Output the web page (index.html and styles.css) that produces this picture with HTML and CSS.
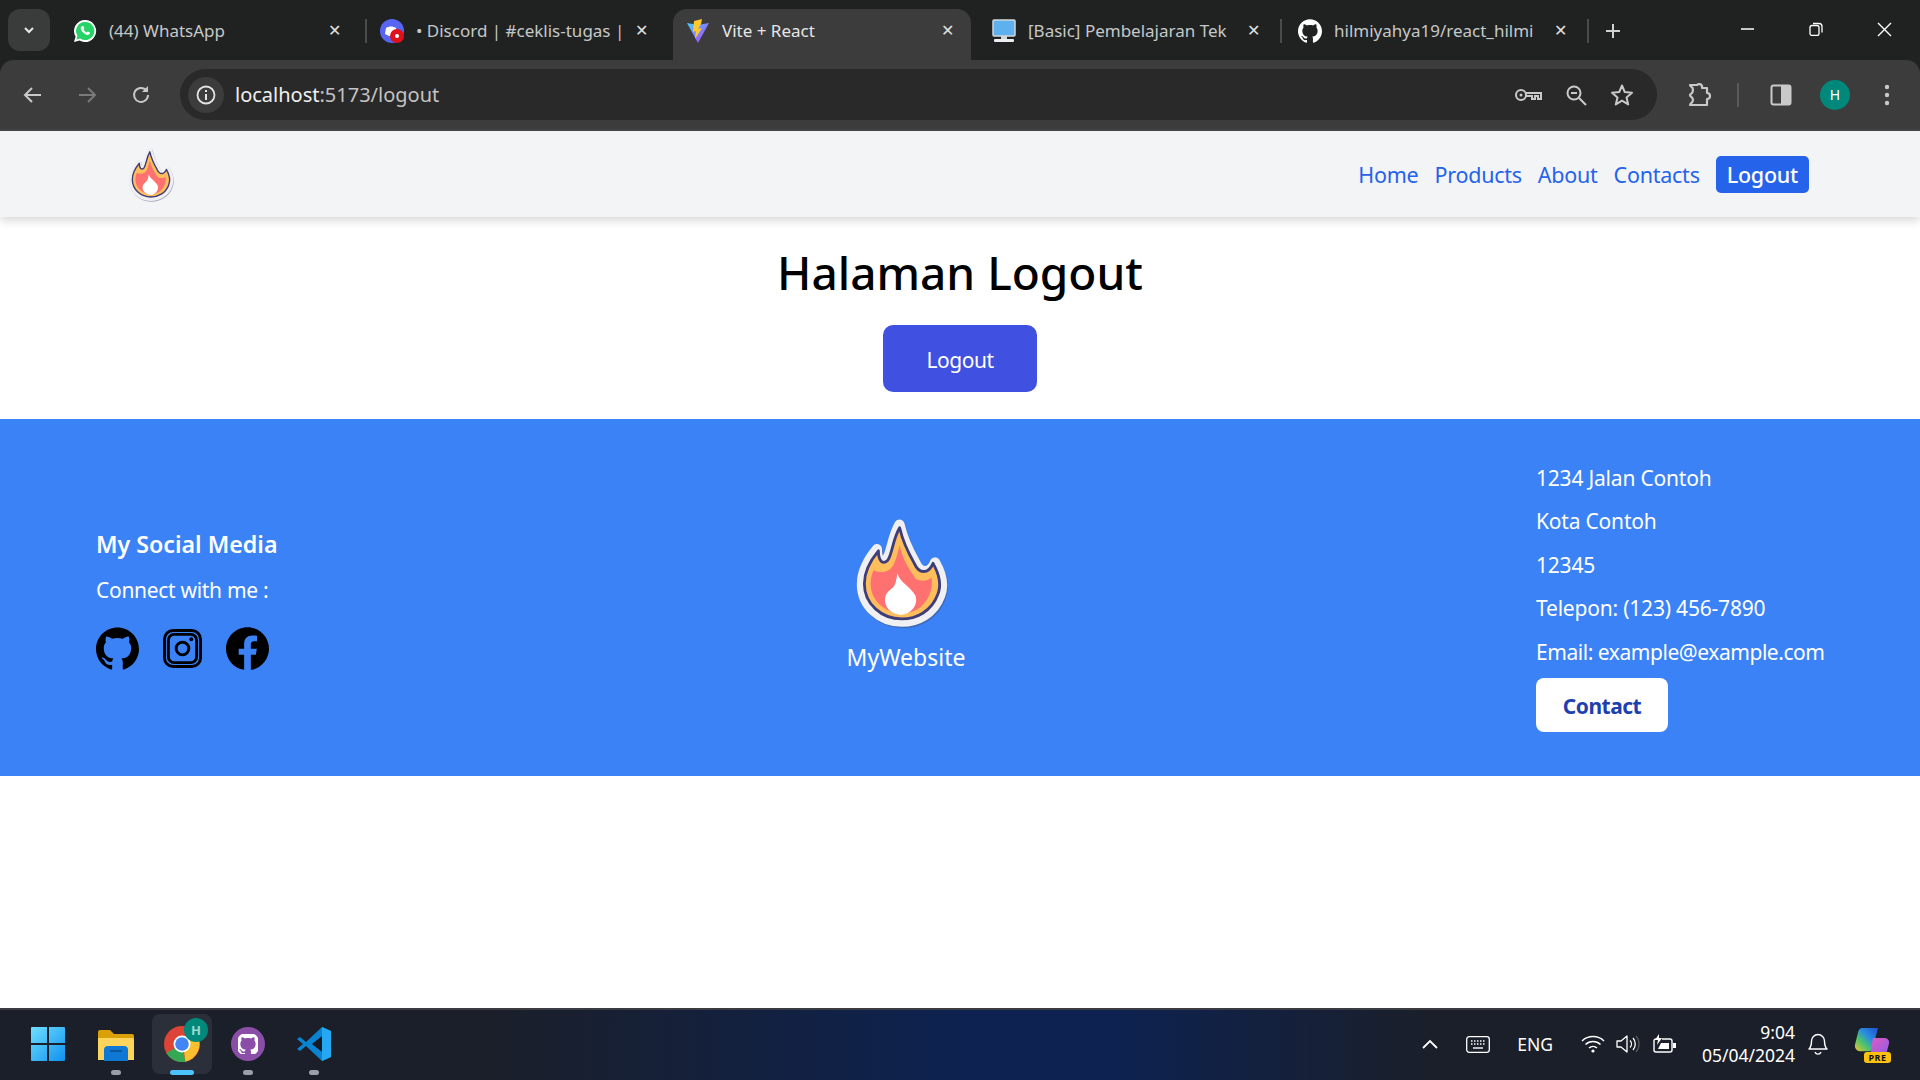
FILE: index.html
```html
<!DOCTYPE html>
<html>
  <head>
    <title>Vite + React</title>
    <link rel="stylesheet" href="styles.css">
  </head>
  <body>
    <svg class="defs" width="0" height="0">
      <symbol id="flame" viewBox="95 50 295 340">
        <path class="flame-shadow" d="M238 76C248 120 262 150 285 190C300 225 330 225 345 190C365 225 372 260 360 290C340 345 290 368 245 368C180 368 125 320 125 255C125 215 145 180 170 150C170 185 185 195 200 180C215 160 215 115 238 76Z" transform="translate(3 5)"/>
        <path class="flame-halo" d="M238 76C248 120 262 150 285 190C300 225 330 225 345 190C365 225 372 260 360 290C340 345 290 368 245 368C180 368 125 320 125 255C125 215 145 180 170 150C170 185 185 195 200 180C215 160 215 115 238 76Z"/>
        <g transform="translate(245 230) scale(.94) translate(-245 -230)">
          <path class="flame-outer" d="M238 76C248 120 262 150 285 190C300 225 330 225 345 190C365 225 372 260 360 290C340 345 290 368 245 368C180 368 125 320 125 255C125 215 145 180 170 150C170 185 185 195 200 180C215 160 215 115 238 76Z"/>
          <path class="flame-inner" d="M238 132C245 170 265 205 290 240C310 250 330 245 340 235C345 265 335 300 310 325C290 345 265 350 245 350C195 350 145 310 145 255C145 235 150 222 155 212C175 222 205 220 218 195C228 175 232 155 238 132Z"/>
        </g>
        <path class="flame-core" d="M232 222C238 250 272 262 286 290C296 320 270 346 243 347C215 346 190 325 195 295C198 280 207 275 215 268C228 258 228 240 232 222Z"/>
      </symbol>
    </svg>

    <div class="chrome">
      <div class="tabstrip">
        <div class="tab-search"><svg width="14" height="14" viewBox="0 0 14 14"><path d="M3 5l4 4 4-4" fill="none" stroke="#e8e8e8" stroke-width="2"/></svg></div>
        <div class="tab">
          <svg class="favicon" viewBox="0 0 24 24"><path d="M12 1a11 11 0 0 0-9.4 16.6L1 23l5.6-1.5A11 11 0 1 0 12 1z" fill="#fff"/><path d="M12 3a9 9 0 0 0-7.6 13.7l-1 3.7 3.8-1A9 9 0 1 0 12 3z" fill="#25d366"/><path d="M8.7 7.2c-.8.7-1.300 2-.7 3.400 1 2.400 3 4.300 5.400 5.100 1.500.5 2.700 0 3.300-.9.300-.5.300-1 .2-1.300l-2.100-1-.9 1.100c-1.400-.5-2.600-1.600-3.300-3l.8-1-.9-2.300c-.5-.2-1.300-.4-1.800-.1z" fill="#fff"/></svg>
          <span class="tab-title">(44) WhatsApp</span>
          <span class="tab-close">✕</span>
        </div>
        <span class="tab-sep"></span>
        <div class="tab">
          <svg class="favicon" viewBox="0 0 24 24"><circle cx="12" cy="12" r="12" fill="#5865f2"/><path d="M6 9c3-2 7-2 10 0l2 6-4 2H9l-4-2z" fill="#fff"/><circle cx="17" cy="17" r="7" fill="#e0111b"/><circle cx="17" cy="17" r="2" fill="#fff"/></svg>
          <span class="tab-title">• Discord | #ceklis-tugas |</span>
          <span class="tab-close">✕</span>
        </div>
        <div class="tab tab-active">
          <svg class="favicon" viewBox="0 0 24 24"><path d="M1 4l11 2 11-2-11 20z" fill="url(#vite)"/><defs><linearGradient id="vite" x1="0" y1="0" x2="1" y2="1"><stop offset="0" stop-color="#41d1ff"/><stop offset="1" stop-color="#bd34fe"/></linearGradient></defs><path d="M16 0L8 2l-1 11 3-1-1 8 7-11-4 1 3-5z" fill="#ffca28"/></svg>
          <span class="tab-title">Vite + React</span>
          <span class="tab-close">✕</span>
        </div>
        <div class="tab tab-basic">
          <svg class="favicon" viewBox="0 0 24 24"><rect x="1" y="1" width="22" height="16" rx="1" fill="#5eb0ef" stroke="#cfd8dc" stroke-width="1.500"/><rect x="9" y="17" width="6" height="3" fill="#cfd8dc"/><rect x="2" y="20" width="20" height="3" rx="1" fill="#eceff1"/></svg>
          <span class="tab-title">[Basic] Pembelajaran Tek</span>
          <span class="tab-close">✕</span>
        </div>
        <span class="tab-sep"></span>
        <div class="tab tab-git">
          <svg class="favicon" viewBox="0 0 24 24"><path fill="#fff" d="M12 .297c-6.63 0-12 5.373-12 12 0 5.303 3.438 9.800 8.205 11.385.6.113.82-.258.82-.577 0-.285-.01-1.040-.015-2.040-3.338.724-4.042-1.610-4.042-1.610C4.422 18.070 3.633 17.700 3.633 17.700c-1.087-.744.084-.729.084-.729 1.205.084 1.838 1.236 1.838 1.236 1.070 1.835 2.809 1.305 3.495.998.108-.776.417-1.305.76-1.605-2.665-.3-5.466-1.332-5.466-5.930 0-1.310.465-2.380 1.235-3.220-.135-.303-.54-1.523.105-3.176 0 0 1.005-.322 3.300 1.230.96-.267 1.980-.399 3-.405 1.020.006 2.040.138 3 .405 2.280-1.552 3.285-1.230 3.285-1.230.645 1.653.24 2.873.12 3.176.765.84 1.230 1.910 1.230 3.220 0 4.610-2.805 5.625-5.475 5.920.42.36.81 1.096.81 2.220 0 1.606-.015 2.896-.015 3.286 0 .315.21.69.825.57C20.565 22.092 24 17.592 24 12.297c0-6.627-5.373-12-12-12"/></svg>
          <span class="tab-title">hilmiyahya19/react_hilmi</span>
          <span class="tab-close">✕</span>
        </div>
        <span class="tab-sep"></span>
        <svg class="new-tab" width="18" height="18" viewBox="0 0 18 18"><path d="M9 2v14M2 9h14" stroke="#d0d0d0" stroke-width="2"/></svg>
        <div class="window-controls">
          <svg width="14" height="14" viewBox="0 0 14 14"><path d="M0 7h13" stroke="#fff" stroke-width="1.500"/></svg>
          <svg width="14" height="14" viewBox="0 0 14 14"><rect x="1" y="3.500" width="9" height="10" rx="2" fill="none" stroke="#fff" stroke-width="1.300"/><path d="M4 1.500h6a3 3 0 0 1 3 3v6" fill="none" stroke="#fff" stroke-width="1.300"/></svg>
          <svg width="15" height="15" viewBox="0 0 15 15"><path d="M1 1l13 13M14 1L1 14" stroke="#fff" stroke-width="1.400"/></svg>
        </div>
      </div>

      <div class="toolbar">
        <svg class="tool" width="24" height="24" viewBox="0 0 24 24"><path d="M20 12H5M11 5l-7 7 7 7" fill="none" stroke="#c9c9c9" stroke-width="2"/></svg>
        <svg class="tool" width="24" height="24" viewBox="0 0 24 24"><path d="M4 12h15M13 5l7 7-7 7" fill="none" stroke="#7a7a7a" stroke-width="2"/></svg>
        <svg class="tool" width="24" height="24" viewBox="0 0 24 24"><path d="M19 12a7 7 0 1 1-2-5" fill="none" stroke="#c9c9c9" stroke-width="2"/><path d="M19 3v6h-6z" fill="#c9c9c9"/></svg>
        <div class="omnibox">
          <div class="site-info"><svg width="22" height="22" viewBox="0 0 22 22"><circle cx="11" cy="11" r="8.500" fill="none" stroke="#e3e3e3" stroke-width="1.800"/><path d="M11 10v6M11 6v2" stroke="#e3e3e3" stroke-width="2"/></svg></div>
          <span class="url">localhost<span class="url-path">:5173/logout</span></span>
          <div class="omni-icons">
            <svg width="28" height="20" viewBox="0 0 28 20"><circle cx="7" cy="10" r="5" fill="none" stroke="#c9c9c9" stroke-width="2"/><circle cx="7" cy="10" r="1.500" fill="#c9c9c9"/><path d="M12 8h15v6h-3v-3h-3v3h-3v-3h-6" fill="none" stroke="#c9c9c9" stroke-width="2"/></svg>
            <svg width="22" height="22" viewBox="0 0 22 22"><circle cx="9" cy="9" r="6.500" fill="none" stroke="#c9c9c9" stroke-width="2"/><path d="M6 9h6M14 14l7 7" stroke="#c9c9c9" stroke-width="2"/></svg>
            <svg width="24" height="24" viewBox="0 0 24 24"><path d="M12 2.500l2.800 6.600 7.200.6-5.500 4.700 1.700 7-6.200-3.700-6.200 3.700 1.700-7L2 9.700l7.200-.6z" fill="none" stroke="#c9c9c9" stroke-width="2" stroke-linejoin="round"/></svg>
          </div>
        </div>
        <svg class="tool-ext" width="26" height="26" viewBox="0 0 26 26"><path d="M4 3h7a3 3 0 0 1 5 1v2h5v5a3 3 0 0 1 0 6v6H4c0-2 3-2 3-5s-3-3-3-5c0-1 3-1 3-5s-3-3-3-5z" fill="none" stroke="#c9c9c9" stroke-width="2.200" stroke-linejoin="round"/></svg>
        <span class="tool-sep"></span>
        <svg class="tool-panel" width="22" height="22" viewBox="0 0 22 22"><rect x="1.500" y="1.500" width="19" height="19" rx="2" fill="none" stroke="#c9c9c9" stroke-width="2"/><rect x="11" y="1.500" width="9.500" height="19" fill="#c9c9c9"/></svg>
        <span class="avatar">H</span>
        <svg class="tool-menu" width="8" height="24" viewBox="0 0 8 24"><circle cx="4" cy="4" r="2.200" fill="#c9c9c9"/><circle cx="4" cy="12" r="2.200" fill="#c9c9c9"/><circle cx="4" cy="20" r="2.200" fill="#c9c9c9"/></svg>
      </div>
    </div>

    <div class="viewport">
      <nav class="navbar">
        <svg class="nav-logo"><use href="#flame"/></svg>
        <div class="nav-links">
          <a href="#">Home</a>
          <a href="#">Products</a>
          <a href="#">About</a>
          <a href="#">Contacts</a>
          <a href="#" class="nav-active">Logout</a>
        </div>
      </nav>

      <main class="content">
        <h1>Halaman Logout</h1>
        <button class="logout-btn">Logout</button>
      </main>

      <footer class="footer">
        <div class="social">
          <h3>My Social Media</h3>
          <p>Connect with me :</p>
          <div class="social-icons">
            <svg width="43" height="43" viewBox="0 0 24 24"><path d="M12 .297c-6.63 0-12 5.373-12 12 0 5.303 3.438 9.800 8.205 11.385.6.113.82-.258.82-.577 0-.285-.01-1.040-.015-2.040-3.338.724-4.042-1.610-4.042-1.610C4.422 18.070 3.633 17.700 3.633 17.700c-1.087-.744.084-.729.084-.729 1.205.084 1.838 1.236 1.838 1.236 1.070 1.835 2.809 1.305 3.495.998.108-.776.417-1.305.76-1.605-2.665-.3-5.466-1.332-5.466-5.930 0-1.310.465-2.380 1.235-3.220-.135-.303-.54-1.523.105-3.176 0 0 1.005-.322 3.300 1.230.96-.267 1.980-.399 3-.405 1.020.006 2.040.138 3 .405 2.280-1.552 3.285-1.230 3.285-1.230.645 1.653.24 2.873.12 3.176.765.84 1.230 1.910 1.230 3.220 0 4.610-2.805 5.625-5.475 5.920.42.36.81 1.096.81 2.220 0 1.606-.015 2.896-.015 3.286 0 .315.21.69.825.57C20.565 22.092 24 17.592 24 12.297c0-6.627-5.373-12-12-12"/></svg>
            <svg width="39" height="39" viewBox="0 0 40 40"><rect x="1.500" y="1.500" width="37" height="37" rx="9" fill="none" stroke="#000" stroke-width="3"/><rect x="5.500" y="5.500" width="29" height="29" rx="6" fill="none" stroke="#000" stroke-width="3"/><circle cx="20" cy="20" r="6.500" fill="none" stroke="#000" stroke-width="3"/><circle cx="29" cy="10.500" r="2" fill="#000"/></svg>
            <svg width="43" height="43" viewBox="0 0 24 24"><path d="M24 12.073c0-6.627-5.373-12-12-12s-12 5.373-12 12c0 5.990 4.388 10.954 10.125 11.854v-8.385H7.078v-3.470h3.047V9.430c0-3.007 1.792-4.669 4.533-4.669 1.312 0 2.686.235 2.686.235v2.953H15.830c-1.491 0-1.956.925-1.956 1.874v2.250h3.328l-.532 3.470h-2.796v8.385C19.612 23.027 24 18.062 24 12.073z"/></svg>
          </div>
        </div>
        <div class="brand">
          <svg class="brand-logo"><use href="#flame"/></svg>
          <span>MyWebsite</span>
        </div>
        <div class="address">
          <p>1234 Jalan Contoh</p>
          <p>Kota Contoh</p>
          <p>12345</p>
          <p>Telepon: (123) 456-7890</p>
          <p class="address-email">Email: example@example.com</p>
          <button class="contact-btn">Contact</button>
        </div>
      </footer>
    </div>

    <div class="taskbar">
      <div class="task-apps">
        <div class="task-app">
          <svg width="36" height="36" viewBox="0 0 36 36"><defs><linearGradient id="win" x1="0" y1="0" x2="1" y2="1"><stop offset="0" stop-color="#6fe0ff"/><stop offset="1" stop-color="#0f90ee"/></linearGradient></defs><path d="M1 2a1 1 0 0 1 1-1h15v16H1zM19 1h15a1 1 0 0 1 1 1v15H19zM1 19h16v16H2a1 1 0 0 1-1-1zM19 19h16v15a1 1 0 0 1-1 1H19z" fill="url(#win)"/></svg>
        </div>
        <div class="task-app running">
          <svg width="36" height="36" viewBox="0 0 36 36"><path d="M0 6a2 2 0 0 1 2-2h10l4 4h18a2 2 0 0 1 2 2v4H0z" fill="#d9a008"/><path d="M0 12h34a2 2 0 0 1 2 2v20H0z" fill="#fdd55c"/><path d="M6 24a4 4 0 0 1 4-4h16a4 4 0 0 1 4 4v11H6z" fill="#0f78d4"/><path d="M12 25h12" stroke="#0a4e8c" stroke-width="1.500"/></svg>
        </div>
        <div class="task-app running active">
          <span class="chrome-logo">
            <svg width="36" height="36" viewBox="0 0 36 36"><circle cx="18" cy="18" r="18" fill="#db4437"/><path d="M18 18L2.400 27a18 18 0 0 0 19 8.700z" fill="#34a853"/><path d="M18 10h15.600a18 18 0 0 1-12.200 25.700z" fill="#fbc02d"/><circle cx="18" cy="18" r="8.500" fill="#fff"/><circle cx="18" cy="18" r="6.800" fill="#4285f4"/></svg>
            <span class="chrome-badge">H</span>
          </span>
        </div>
        <div class="task-app running">
          <svg width="34" height="34" viewBox="0 0 34 34"><circle cx="17" cy="17" r="17" fill="#8a4ea8"/><svg x="7" y="7" width="20" height="20" viewBox="2 2 20 20"><path fill="#fff" d="M12 .297c-6.63 0-12 5.373-12 12 0 5.303 3.438 9.800 8.205 11.385.6.113.82-.258.82-.577 0-.285-.01-1.040-.015-2.040-3.338.724-4.042-1.610-4.042-1.610C4.422 18.070 3.633 17.700 3.633 17.700c-1.087-.744.084-.729.084-.729 1.205.084 1.838 1.236 1.838 1.236 1.070 1.835 2.809 1.305 3.495.998.108-.776.417-1.305.76-1.605-2.665-.3-5.466-1.332-5.466-5.930 0-1.310.465-2.380 1.235-3.220-.135-.303-.54-1.523.105-3.176 0 0 1.005-.322 3.300 1.230.96-.267 1.980-.399 3-.405 1.020.006 2.040.138 3 .405 2.280-1.552 3.285-1.230 3.285-1.230.645 1.653.24 2.873.12 3.176.765.84 1.230 1.910 1.230 3.220 0 4.610-2.805 5.625-5.475 5.920.42.36.81 1.096.81 2.220 0 1.606-.015 2.896-.015 3.286 0 .315.21.69.825.57C20.565 22.092 24 17.592 24 12.297c0-6.627-5.373-12-12-12"/></svg></svg>
        </div>
        <div class="task-app running">
          <svg width="36" height="36" viewBox="0 0 36 36"><path d="M26 1l9 4v26l-9 4L10 20l-6 5-3-2 6-5-6-5 3-2 6 5z" fill="#0a84d0"/><path d="M26 1l9 4v26l-9 4z" fill="#24a8f2"/><path d="M26 10v16l-10-8z" fill="#151a24"/></svg>
        </div>
      </div>
      <div class="tray">
        <svg class="tray-chevron" width="16" height="10" viewBox="0 0 16 10"><path d="M1 9l7-7 7 7" fill="none" stroke="#fff" stroke-width="1.800"/></svg>
        <svg class="tray-keyboard" width="24" height="17" viewBox="0 0 24 17"><rect x=".7" y=".7" width="22.600" height="15.600" rx="2.500" fill="none" stroke="#fff" stroke-width="1.300"/><path d="M5 5h14M5 8h14" stroke="#fff" stroke-width="1.500" stroke-dasharray="1.500 1.500"/><path d="M7 12h10" stroke="#fff" stroke-width="1.400"/></svg>
        <span class="tray-lang">ENG</span>
        <svg class="tray-wifi" width="24" height="18" viewBox="0 0 24 18"><path d="M1 6a16 16 0 0 1 22 0M4.500 9.500a11 11 0 0 1 15 0M8 13a6 6 0 0 1 8 0" fill="none" stroke="#fff" stroke-width="1.500"/><circle cx="12" cy="16" r="1.600" fill="#fff"/></svg>
        <svg class="tray-sound" width="24" height="20" viewBox="0 0 24 20"><path d="M1 7h4l6-5v16l-6-5H1z" fill="none" stroke="#fff" stroke-width="1.300" stroke-linejoin="round"/><path d="M14 6.500a5 5 0 0 1 0 7M17 4a9 9 0 0 1 0 12" fill="none" stroke="#fff" stroke-width="1.300"/><path d="M20 2a12 12 0 0 1 0 16" fill="none" stroke="#555" stroke-width="1.300"/></svg>
        <svg class="tray-battery" width="24" height="20" viewBox="0 0 24 20"><path d="M5 5H3a2 2 0 0 0-2 2v9a2 2 0 0 0 2 2h14a2 2 0 0 0 2-2V7a2 2 0 0 0-2-2H9" fill="none" stroke="#fff" stroke-width="1.400"/><path d="M5 15l3-6h8v6z" fill="#fff"/><path d="M20 9h3v5h-3z" fill="#fff"/><path d="M6 0L2 6h3l-1 5 5-7H6z" fill="#fff"/></svg>
        <div class="clock"><span>9:04</span><span>05/04/2024</span></div>
        <svg class="tray-bell" width="22" height="24" viewBox="0 0 22 24"><path d="M2 17c2-2 2.500-4 2.500-8a6.500 6.500 0 0 1 13 0c0 4 .5 6 2.500 8z" fill="none" stroke="#fff" stroke-width="1.400" stroke-linejoin="round"/><path d="M8 20a3.200 3.200 0 0 0 6 0" fill="none" stroke="#fff" stroke-width="1.400"/></svg>
        <span class="copilot">
          <svg width="36" height="31" viewBox="0 0 36 28" preserveAspectRatio="none"><defs><linearGradient id="cop" x1="0" y1="1" x2="1" y2="0"><stop offset="0" stop-color="#f2c230"/><stop offset=".35" stop-color="#49c46c"/><stop offset=".6" stop-color="#2a8de0"/><stop offset="1" stop-color="#1e4fd0"/></linearGradient><linearGradient id="cop2" x1="0" y1="0" x2="1" y2="1"><stop offset="0" stop-color="#e25cc0"/><stop offset="1" stop-color="#8a5be8"/></linearGradient></defs><path d="M8 1h16l-5 17a5 5 0 0 1-5 4H6a5 5 0 0 1-5-6l3-11a5 5 0 0 1 4-4z" fill="url(#cop)"/><path d="M19 10h12a4 4 0 0 1 4 5l-2 7a6 6 0 0 1-5 4H16z" fill="url(#cop2)"/></svg>
          <span class="pre">PRE</span>
        </span>
      </div>
    </div>
  </body>
</html>
```

FILE: styles.css
```css
* {
  box-sizing: border-box;
}

html, body {
  height: 100%;
}

body {
  margin: 0;
  display: flex;
  flex-direction: column;
  height: 1080px;
  overflow: hidden;
  background-color: #ffffff;
  font-family: "Noto Sans", "Open Sans", sans-serif;
  color: #000000;
}

.defs {
  position: absolute;
}

/* flame logo */
.flame-shadow {
  fill: none;
  stroke: #4a4f7a;
  stroke-width: 30px;
  stroke-linejoin: round;
  opacity: .5;
}

.flame-halo {
  fill: #f0f0f2;
  stroke: #f0f0f2;
  stroke-width: 31px;
  stroke-linejoin: round;
}

.flame-outer {
  fill: #ffbe5c;
  stroke: #3f3d78;
  stroke-width: 9px;
  stroke-linejoin: round;
}

.flame-inner {
  fill: #ff7070;
}

.flame-core {
  fill: #ffffff;
}

/* browser */
.chrome {
  background-color: #202222;
  height: 131px;
  flex: none;
}

.tabstrip {
  display: flex;
  align-items: flex-start;
  height: 60px;
  padding: 9px 0 0 8px;
}

.tab-search {
  width: 42px;
  height: 42px;
  border-radius: 12px;
  background-color: #3a3b3b;
  display: flex;
  align-items: center;
  justify-content: center;
  margin-right: 10px;
  flex: none;
}

.tab {
  width: 306px;
  height: 51px;
  padding: 10px 25px 0 13px;
  display: flex;
  align-items: flex-start;
  font-size: 17px;
  color: #c6c8c8;
  flex: none;
  border-radius: 14px 14px 0 0;
}

.tab-active {
  background-color: #3c3c3c;
  color: #e6e6e6;
  width: 298px;
  padding-right: 17px;
}

.tab-basic {
  width: 310px;
  padding: 10px 21px 0 21px;
}

.tab-git {
  padding: 10px 21px 0 16px;
}

.favicon {
  width: 24px;
  height: 24px;
  flex: none;
  margin-right: 12px;
}

.tab-title {
  flex: 1;
  min-width: 0;
  white-space: nowrap;
  line-height: 24px;
}

.tab-close {
  margin-left: 8px;
  font-size: 16px;
  line-height: 22px;
  color: #e0e0e0;
}

.tab-sep {
  width: 2px;
  height: 24px;
  margin: 10px 0 0 -1px;
  background-color: #4a4c4c;
  flex: none;
}

.new-tab {
  margin: 13px 0 0 15px;
  flex: none;
}

.window-controls {
  margin-left: auto;
  width: 151px;
  margin-right: 28px;
  padding-top: 13px;
  display: flex;
  justify-content: space-between;
}

.toolbar {
  height: 71px;
  background-color: #3c3c3c;
  border-radius: 14px 14px 0 0;
  border-bottom: 2px solid #464646;
  padding: 9px 0 9px 21px;
  display: flex;
  align-items: center;
}

.tool {
  margin-right: 30px;
  flex: none;
}

.tool:nth-child(3) {
  margin-right: 27px;
}

.omnibox {
  width: 1477px;
  height: 51px;
  border-radius: 26px;
  background-color: #292929;
  padding: 0 23px 0 8px;
  display: flex;
  align-items: center;
  flex: none;
}

.site-info {
  width: 36px;
  height: 36px;
  border-radius: 50%;
  background-color: #3c3c3c;
  display: flex;
  align-items: center;
  justify-content: center;
  margin-right: 11px;
}

.url {
  font-size: 20px;
  color: #f0f0f0;
}

.url-path {
  color: #c3c3c3;
}

.omni-icons {
  margin-left: auto;
  display: flex;
  align-items: center;
  gap: 23px;
}

.tool-ext {
  margin-left: 29px;
}

.tool-sep {
  width: 2px;
  height: 24px;
  margin-left: 25px;
  background-color: #5a5a5a;
}

.tool-panel {
  margin-left: 31px;
}

.avatar {
  width: 30px;
  height: 30px;
  margin-left: 28px;
  border-radius: 50%;
  background-color: #00897b;
  color: #ffffff;
  font-size: 14px;
  display: flex;
  align-items: center;
  justify-content: center;
}

.tool-menu {
  margin-left: 33px;
}

/* page */
.viewport {
  flex: 1;
  background-color: #ffffff;
}

.navbar {
  height: 86px;
  background-color: #f3f4f6;
  box-shadow: 0 4px 8px rgba(0, 0, 0, .15);
  display: flex;
  align-items: center;
  justify-content: space-between;
  padding: 0 111px 0 126px;
  position: relative;
}

.nav-logo {
  width: 49px;
  height: 56px;
}

.nav-links {
  display: flex;
  align-items: center;
  gap: 16px;
  font-size: 21.5px;
  letter-spacing: -.25px;
}

.nav-links a {
  color: #2563eb;
  text-decoration: none;
}

.nav-links .nav-active {
  background-color: #2563eb;
  color: #ffffff;
  border-radius: 5px;
  padding: 0 11px;
  height: 37px;
  line-height: 37px;
  font-weight: 500;
}

.content {
  height: 202px;
  padding-top: 19px;
  display: flex;
  flex-direction: column;
  align-items: center;
}

.content h1 {
  margin: 0;
  font-size: 46px;
  font-weight: 500;
  line-height: 72px;
}

.logout-btn {
  margin-top: 17px;
  padding-top: 3px;
  width: 154px;
  height: 67px;
  border: none;
  border-radius: 10px;
  background-color: #4050e0;
  color: #ffffff;
  font-family: inherit;
  font-size: 21px;
  letter-spacing: -.45px;
}

.footer {
  height: 357px;
  background-color: #3b82f6;
  color: #ffffff;
  display: flex;
  align-items: center;
  padding: 0 0 0 96px;
  font-size: 21px;
}

.social {
  width: 750px;
  padding-top: 2px;
}

.social h3 {
  margin: 0 0 15px;
  font-size: 23.2px;
  font-weight: 600;
  line-height: 32px;
}

.social p {
  margin: 0 0 22px;
  line-height: 30px;
  letter-spacing: -.3px;
}

.social-icons {
  display: flex;
  align-items: center;
  gap: 24px;
}

.brand {
  width: 120px;
  padding-bottom: 6px;
  display: flex;
  flex-direction: column;
  align-items: center;
  flex: none;
  font-size: 23px;
}

.brand-logo {
  width: 98px;
  height: 113px;
  margin: 0 0 12px -10px;
}

.address {
  margin-left: 570px;
  white-space: nowrap;
}

.address p {
  margin: 0 0 13.5px;
  line-height: 30px;
  letter-spacing: -.2px;
}

.address .address-email {
  letter-spacing: -.45px;
}

.contact-btn {
  margin-top: -2px;
  padding-top: 2px;
  width: 132px;
  height: 54px;
  border: none;
  border-radius: 8px;
  background-color: #ffffff;
  color: #1e40af;
  font-family: inherit;
  font-size: 21px;
  font-weight: 700;
  letter-spacing: -.5px;
  display: block;
}

/* windows taskbar */
.taskbar {
  height: 72px;
  flex: none;
  background: linear-gradient(to right, #1b1f29 25%, #0d2250 50%, #0d2250 58%, #1b1f29 75%);
  border-top: 2px solid #3a3c42;
  display: flex;
  align-items: center;
  justify-content: space-between;
  padding: 0 30px 2px 18px;
}

.task-apps {
  display: flex;
  align-items: center;
  gap: 6px;
}

.task-app {
  width: 60px;
  height: 60px;
  border-radius: 8px;
  display: flex;
  align-items: center;
  justify-content: center;
  position: relative;
}

.task-app:not(:first-child) {
  left: 2px;
}

.task-app.running::after {
  content: "";
  position: absolute;
  bottom: -1px;
  left: 25px;
  width: 10px;
  height: 5px;
  border-radius: 3px;
  background-color: #9aa0a8;
}

.task-app.active {
  background-color: #2b2f3a;
}

.task-app.active::after {
  left: 18px;
  width: 24px;
  background-color: #4cc2ff;
}

.chrome-logo {
  position: relative;
  display: block;
  width: 36px;
  height: 36px;
}

.chrome-badge {
  position: absolute;
  top: -8px;
  right: -8px;
  width: 24px;
  height: 24px;
  border-radius: 50%;
  background-color: #00897b;
  color: #9ad8d0;
  font-size: 13px;
  font-weight: 700;
  display: flex;
  align-items: center;
  justify-content: center;
}

.tray {
  display: flex;
  align-items: center;
  color: #ffffff;
  font-size: 17.5px;
}

.tray-keyboard {
  margin-left: 28px;
}

.tray-lang {
  margin-left: 27px;
}

.tray-wifi {
  margin-left: 28px;
}

.tray-sound {
  margin-left: 11px;
}

.tray-battery {
  margin-left: 13px;
}

.clock {
  width: 118px;
  display: flex;
  flex-direction: column;
  align-items: flex-end;
  line-height: 23px;
}

.tray-bell {
  margin-left: 12px;
}

.copilot {
  margin-left: 25px;
  position: relative;
  display: block;
  width: 36px;
  height: 34px;
}

.pre {
  position: absolute;
  right: -1px;
  bottom: -2px;
  width: 27px;
  height: 11px;
  border-radius: 3px;
  background-color: #ffc20e;
  color: #111111;
  font-size: 9px;
  font-weight: 700;
  line-height: 11px;
  text-align: center;
  letter-spacing: .5px;
}
```
